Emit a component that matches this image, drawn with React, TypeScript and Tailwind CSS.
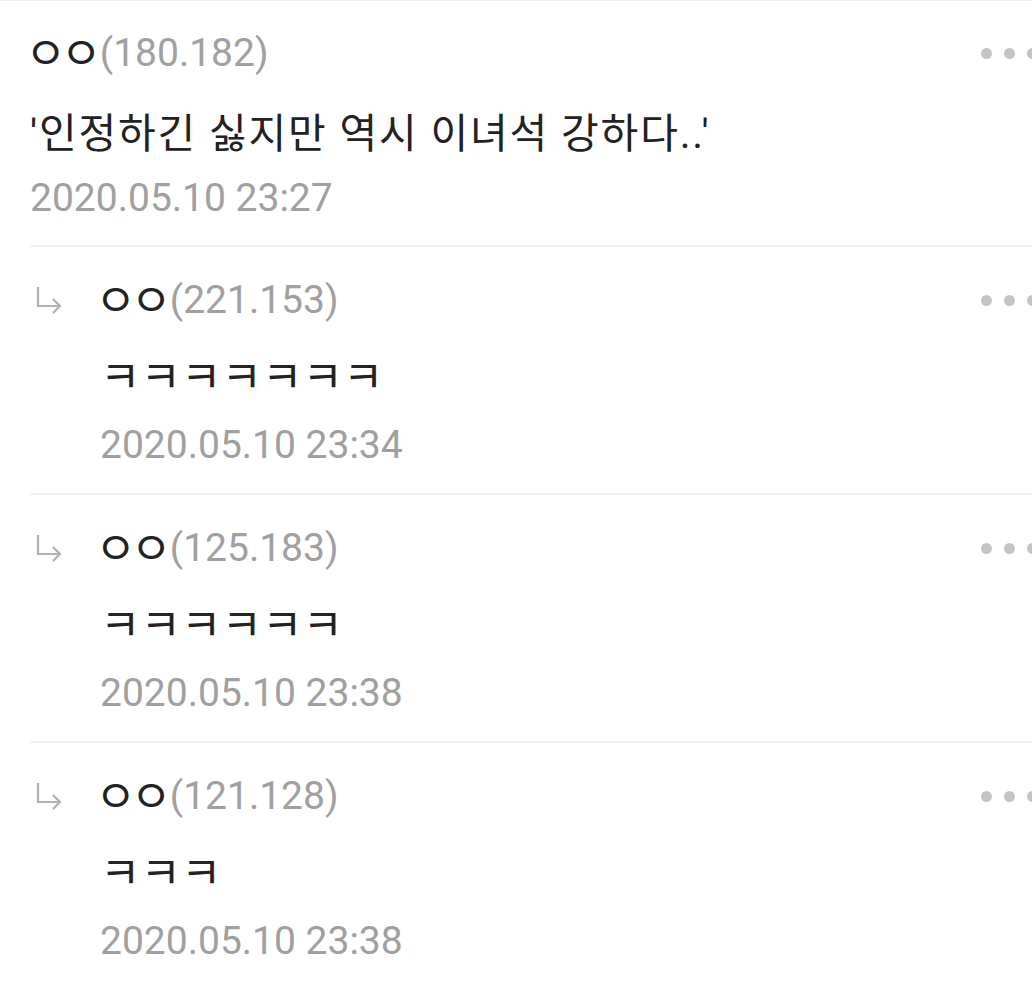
import React from "react";

interface Comment {
  id: number;
  name: string;
  ip: string;
  body: string;
  date: string;
  reply: boolean;
}

const comments: Comment[] = [
  { id: 1, name: "ㅇㅇ", ip: "(180.182)", body: "'인정하긴 싫지만 역시 이녀석 강하다..'", date: "2020.05.10 23:27", reply: false },
  { id: 2, name: "ㅇㅇ", ip: "(221.153)", body: "ㅋㅋㅋㅋㅋㅋㅋ", date: "2020.05.10 23:34", reply: true },
  { id: 3, name: "ㅇㅇ", ip: "(125.183)", body: "ㅋㅋㅋㅋㅋㅋ", date: "2020.05.10 23:38", reply: true },
  { id: 4, name: "ㅇㅇ", ip: "(121.128)", body: "ㅋㅋㅋ", date: "2020.05.10 23:38", reply: true },
];

function Dots() {
  return (
    <div className="flex items-center gap-[12px] shrink-0 -mr-[6px]">
      <span className="w-[11px] h-[11px] rounded-full bg-[#c4c4c4]" />
      <span className="w-[11px] h-[11px] rounded-full bg-[#c4c4c4]" />
      <span className="w-[11px] h-[11px] rounded-full bg-[#c4c4c4]" />
    </div>
  );
}

function ReplyArrow() {
  return (
    <svg width="28" height="29" viewBox="0 0 28 29" fill="none" stroke="#b0b0b0" strokeWidth="2.2">
      <path d="M3 1 V20 H25" />
      <path d="M18 13 L25 20 L18 27" />
    </svg>
  );
}

export default function App() {
  return (
    <div
      className="w-[1032px] h-[986px] overflow-hidden bg-white"
      style={{ fontFamily: "Roboto, 'Noto Sans CJK KR', sans-serif" }}
    >
      <div className="h-[1px] bg-[#f0f0f0]" />
      {comments.map((c) => (
        <div
          key={c.id}
          className={`ml-[30px] flex ${c.reply ? "pt-[29px] pb-[24px]" : "pt-[28px] pb-[23px]"} ${
            c.id !== 4 ? "border-b-[2px] border-[#f2f2f2]" : ""
          }`}
        >
          {c.reply && (
            <div className="w-[70px] shrink-0 h-[48px] flex items-center pl-[5px]">
              <ReplyArrow />
            </div>
          )}
          <div className="flex-1 min-w-0">
            <div className="flex items-center h-[48px]">
              <div className="flex-1 flex items-center leading-none">
                <span className="text-[45px] text-[#222222] -ml-[5px] tracking-[-6px] relative top-[1px]">{c.name}</span>
                <span className="text-[39px] text-[#a0a0a0] ml-[4px]">{c.ip}</span>
              </div>
              <Dots />
            </div>
            <div
              className={`h-[48px] flex items-center text-[#222222] ${
                c.reply ? "mt-[30px] text-[44px]" : "mt-[34px] text-[41px] tracking-[1.8px]"
              }`}
            >
              {c.body}
            </div>
            <div className={`h-[48px] flex items-center text-[39px] text-[#a0a0a0] ${c.reply ? "mt-[19px]" : "mt-[15px]"}`}>
              {c.date}
            </div>
          </div>
        </div>
      ))}
    </div>
  );
}
